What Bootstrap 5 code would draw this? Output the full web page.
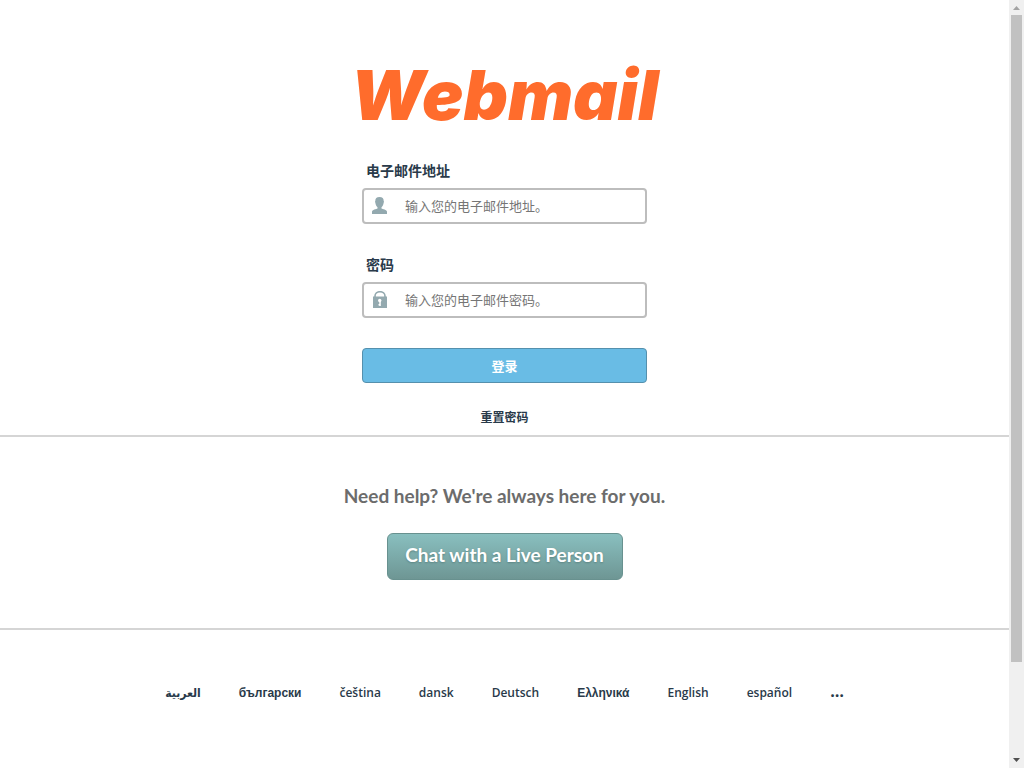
<!DOCTYPE html>
<html lang="zh-CN">
<head>
<meta charset="utf-8">
<meta name="viewport" content="width=device-width, initial-scale=1">
<title>Webmail 登录</title>
<link href="https://cdn.jsdelivr.net/npm/bootstrap@5.3.0/dist/css/bootstrap.min.css" rel="stylesheet">
<style>
body { font-family: "Open Sans", "Noto Sans CJK SC", sans-serif; color: #293a4a; background: #fff; }
.brand { height: 50px; margin: 70px 0 40px; color: #ff6c2c; font: italic 900 69px/50px Inter, sans-serif; white-space: nowrap; }
.login-form { width: 285px; }
.login-form label { font-size: 14px; line-height: 20px; font-weight: 700; margin: 1px 4px 7px; }
.field { height: 36px; border: 2px solid #bdbdbd; border-radius: 4px; margin-bottom: 30px; padding-left: 7px; }
.field input { font-size: 13px; line-height: 20px; margin-left: 17px; padding: 0; color: #555; outline: 0; }
.field input::placeholder { color: #757575; opacity: 1; }
.btn-login { height: 35px; background: #69bce5; border: 1px solid #5590ad; border-radius: 4px; color: #fff; font-size: 13px; line-height: 20px; font-weight: 700; padding: 0; }
.reset { font-size: 12px; line-height: 20px; font-weight: 700; margin: 25px 0 7px; color: #293a4a; }
.help { border-top: 2px solid #d5d5d5; border-bottom: 2px solid #d5d5d5; height: 195px; padding-top: 47px; font-family: Lato, sans-serif; }
.help h2 { font-size: 19px; line-height: 24px; font-weight: 700; color: #6c6c6c; margin: 0 0 25px; }
.btn-chat { width: 236px; height: 47px; font-size: 19px; line-height: 24px; font-weight: 700; color: #fff; padding: 0 0 4px; border: 1px solid #68918f; border-radius: 6px; background: linear-gradient(#89bfbf, #6e9694); text-shadow: 0 1px 2px #5d8583; }
.locales { gap: 38px; padding-top: 53px; font-size: 12px; line-height: 20px; font-weight: 600; }
.locales a { color: #293a4a; }
.locales .other { font-family: "Liberation Sans", sans-serif; font-weight: 700; }
.locales .arabic { font-family: "DejaVu Sans Condensed", "DejaVu Sans", sans-serif; font-weight: 700; }
.locales .more { font-size: 16px; line-height: 16px; font-weight: 700; }
.rail { width: 15px; background: #f0f0f0; padding: 5px 2px; }
.thumb { width: 11px; height: 84.25vh; background: #c1c1c1; margin-top: 4px; }
</style>
</head>
<body>
<div class="d-flex min-vh-100">
  <div class="flex-grow-1">
    <main class="d-flex flex-column align-items-center">
      <h1 class="brand">Webmail</h1>
      <form class="login-form d-flex flex-column">
        <label for="user">电子邮件地址</label>
        <div class="field d-flex align-items-center">
          <svg width="17" height="18" viewBox="0 0 17 18" fill="#93a9af" aria-hidden="true"><path d="M8.500 0C5.500 0 4.300 1.600 4.300 3.900L4 4.500l.5 2c.4 1.900 1 3 2 3.700v1.300C5.500 12.300 1 12.500 1 14.800V17h15v-2.200c0-2.300-4.500-2.500-5.500-3.300v-1.300c1-.7 1.600-1.800 2-3.700l.5-2-.3-.6C12.700 1.600 11.500 0 8.500 0z"/></svg>
          <input id="user" type="text" class="border-0 flex-grow-1" placeholder="输入您的电子邮件地址。">
        </div>
        <label for="pass">密码</label>
        <div class="field d-flex align-items-center">
          <svg width="17" height="18" viewBox="0 0 17 18" aria-hidden="true"><path d="M4 7V5a5 4.300 0 0 1 10 0v2" fill="none" stroke="#93a9af" stroke-width="1.600"/><path d="M2 5.500h14V17H2z" fill="#93a9af"/><circle cx="8.700" cy="9.500" r="1.700" fill="#fff"/><path d="M8.300 10h1.500v5H8.300zM7.500 13h1v1.500h-1z" fill="#fff"/></svg>
          <input id="pass" type="password" class="border-0 flex-grow-1" placeholder="输入您的电子邮件密码。">
        </div>
        <button type="submit" class="btn btn-login w-100">登录</button>
      </form>
      <a href="#" class="reset text-decoration-none">重置密码</a>
    </main>
    <section class="help text-center">
      <h2>Need help? We're always here for you.</h2>
      <button type="button" class="btn btn-chat">Chat with a Live Person</button>
    </section>
    <nav class="locales d-flex justify-content-center" aria-label="语言">
      <a class="text-decoration-none arabic" href="#" lang="ar">العربية</a>
      <a class="text-decoration-none other" href="#" lang="bg">български</a>
      <a class="text-decoration-none" href="#" lang="cs">čeština</a>
      <a class="text-decoration-none" href="#" lang="da">dansk</a>
      <a class="text-decoration-none" href="#" lang="de">Deutsch</a>
      <a class="text-decoration-none other" href="#" lang="el">Ελληνικά</a>
      <a class="text-decoration-none" href="#" lang="en">English</a>
      <a class="text-decoration-none" href="#" lang="es">español</a>
      <a class="text-decoration-none more" href="#" aria-label="更多语言">…</a>
    </nav>
  </div>
  <div class="rail d-flex flex-column align-items-start flex-shrink-0" aria-hidden="true">
    <svg width="11" height="6" viewBox="0 0 11 6"><path d="M2 5 5.500 1 9 5z" fill="#a3a3a3"/></svg>
    <div class="thumb"></div>
    <svg class="mt-auto" width="11" height="6" viewBox="0 0 11 6"><path d="M2 1h7L5.500 5z" fill="#505050"/></svg>
  </div>
</div>
<script src="https://cdn.jsdelivr.net/npm/bootstrap@5.3.0/dist/js/bootstrap.bundle.min.js"></script>
</body>
</html>
